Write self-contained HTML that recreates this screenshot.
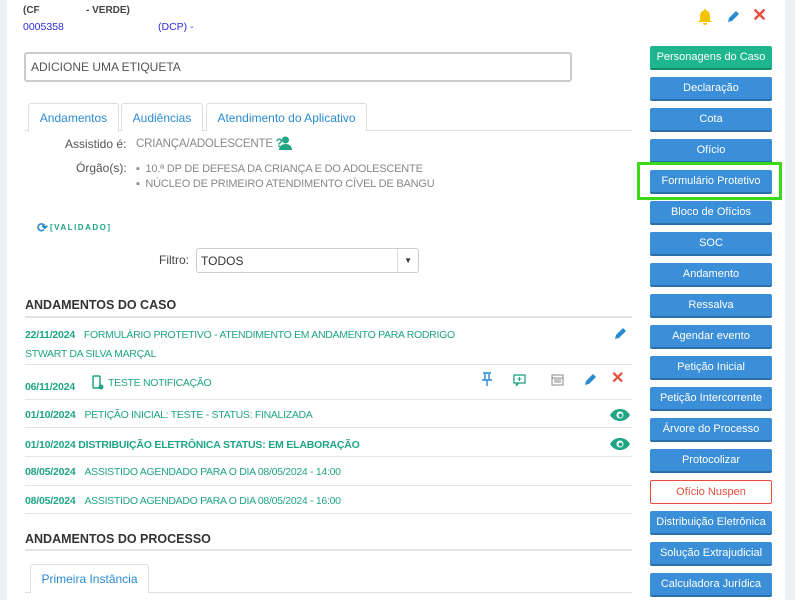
<!DOCTYPE html>
<html><head><meta charset="utf-8"><style>
*{box-sizing:border-box;margin:0;padding:0}
body{width:795px;height:600px;overflow:hidden;background:#fff;font-family:"Liberation Sans",sans-serif;position:relative;color:#555}
.a{position:absolute;white-space:nowrap}
.btn{position:absolute;left:650px;width:122px;height:24px;background:#3a8fd8;color:#fff;font-size:11px;text-align:center;line-height:23px;border-radius:2px;border-bottom:2px solid #2c6fa8}
.g{color:#1fa584;font-size:10.5px;letter-spacing:-0.3px}
.d{font-weight:bold;color:#1fa584;font-size:10.5px;letter-spacing:-0.2px}
.hr{position:absolute;left:25px;width:607px;height:1px;background:#e6e6e6}
.tab{position:absolute;top:103px;height:28px;border:1px solid #ddd;border-bottom:none;border-radius:3px 3px 0 0;color:#2a8ad0;font-size:12px;line-height:28px;text-align:center;background:#fff}
</style></head><body>
<div class="a" style="left:0;top:0;width:7px;height:600px;background:#eef0f2"></div>
<div class="a" style="left:785px;top:0;width:10px;height:600px;background:#eef0f2"></div>
<div class="a" style="left:23px;top:5px;font-size:10px;font-weight:bold;color:#444">(CF</div>
<div class="a" style="left:86px;top:5px;font-size:10px;font-weight:bold;color:#444">- VERDE)</div>
<div class="a" style="left:23px;top:21px;font-size:10.5px;color:#2b2bdd">0005358</div>
<div class="a" style="left:158px;top:21px;font-size:10.5px;color:#2b2bdd">(DCP) -</div>
<svg class="a" style="left:696px;top:8px" width="18" height="18" viewBox="0 0 18 18"><path d="M9 1c-1 0-1 1-1 1.5C5 3 4 6 4 8v4l-2 2h14l-2-2V8c0-2-1-5-4-5.5C10 2 10 1 9 1z M7 15a2 2 0 0 0 4 0z" fill="#f5c400"/></svg>
<svg class="a" style="left:726px;top:9px" width="15" height="15" viewBox="0 0 15 15"><path d="M2 13l1-4 7-7 3 3-7 7z" fill="#2a8ad0"/></svg>
<div class="a" style="left:752px;top:5px;font-size:18px;color:#e74c3c;font-weight:bold">✕</div>
<div class="a" style="left:24px;top:52px;width:548px;height:30px;border:2px solid #ccc;border-radius:3px;font-size:12px;line-height:26px;padding-left:5px;color:#555">ADICIONE UMA ETIQUETA</div>
<div class="a" style="left:25px;top:130px;width:607px;height:1px;background:#ddd"></div>
<div class="tab" style="left:28px;width:91px;height:29px">Andamentos</div>
<div class="tab" style="left:121px;width:82px">Audiências</div>
<div class="tab" style="left:206px;width:161px">Atendimento do Aplicativo</div>
<div class="a" style="left:65px;top:137px;font-size:12px;color:#555">Assistido é:</div>
<div class="a" style="left:136px;top:138px;font-size:11.5px;color:#888;letter-spacing:-0.2px">CRIANÇA/ADOLESCENTE <span style="color:#1fa584;font-weight:bold">?</span></div>
<svg class="a" style="left:279px;top:136px" width="13" height="14" viewBox="0 0 13 14"><circle cx="6.5" cy="4" r="3.5" fill="#1fa584"/><path d="M0 14c0-4 3-6 6.5-6S13 10 13 14z" fill="#1fa584"/></svg>
<div class="a" style="left:76px;top:161px;font-size:12px;color:#555">Órgão(s):</div>
<div class="a" style="left:136px;top:162px;font-size:11px;color:#888;line-height:15px;letter-spacing:-0.2px">▪ &nbsp;10.ª DP DE DEFESA DA CRIANÇA E DO ADOLESCENTE<br>▪ &nbsp;NÚCLEO DE PRIMEIRO ATENDIMENTO CÍVEL DE BANGU</div>
<div class="a" style="left:37px;top:220px;font-size:13px;color:#2a8ad0;font-weight:bold">⟳</div>
<div class="a" style="left:50px;top:223px;font-size:8px;color:#1fa584;letter-spacing:1.5px;font-weight:bold">[VALIDADO]</div>
<div class="a" style="left:159px;top:253px;font-size:12px;color:#444">Filtro:</div>
<div class="a" style="left:196px;top:248px;width:223px;height:25px;border:1px solid #ccc;border-radius:3px;font-size:12px;line-height:24px;padding-left:4px;color:#333">TODOS<span style="position:absolute;left:200px;top:0;width:1px;height:23px;background:#ddd"></span><span style="position:absolute;right:6px;top:0;font-size:8px">▼</span></div>
<div class="a" style="left:25px;top:298px;font-size:12.5px;font-weight:bold;color:#333">ANDAMENTOS DO CASO</div>
<div class="a" style="left:25px;top:316px;width:607px;height:2px;background:#e3e3e3"></div>
<div class="a" style="left:25px;top:325px;line-height:17px"><span class="d">22/11/2024</span> &nbsp;<span class="g">FORMULÁRIO PROTETIVO - ATENDIMENTO EM ANDAMENTO PARA RODRIGO</span><br><span class="g">STWART DA SILVA MARÇAL</span></div>
<svg class="a" style="left:613px;top:326px" width="15" height="15" viewBox="0 0 15 15"><path d="M2 13l1-4 7-7 3 3-7 7z" fill="#2a8ad0"/></svg>
<div class="hr" style="top:364px"></div>
<div class="a" style="left:25px;top:377px"><span class="d">06/11/2024</span></div>
<svg class="a" style="left:92px;top:375px" width="12" height="15" viewBox="0 0 12 15"><rect x="1" y="1" width="7" height="12" rx="1" fill="none" stroke="#1fa584" stroke-width="1.5"/><circle cx="9" cy="12" r="2.5" fill="#1fa584"/></svg>
<div class="a g" style="left:108px;top:377px">TESTE NOTIFICAÇÃO</div>
<svg class="a" style="left:481px;top:372px" width="12" height="15" viewBox="0 0 12 15"><path d="M2 1h8M4 1v7M8 1v7M1 8h10M6 8v6" stroke="#2a8ad0" stroke-width="1.4" fill="none"/></svg>
<svg class="a" style="left:513px;top:374px" width="13" height="13" viewBox="0 0 13 13"><rect x="1" y="1" width="11" height="8" fill="none" stroke="#1fa584" stroke-width="1.3"/><path d="M6.5 3v4M4.5 5h4M4 9l-1 3 3-3" stroke="#1fa584" fill="none"/></svg>
<svg class="a" style="left:551px;top:373px" width="13" height="13" viewBox="0 0 13 13"><rect x="1" y="2" width="11" height="10" fill="none" stroke="#888"/><path d="M1 5h11M3 7h7M3 9h7" stroke="#888"/></svg>
<svg class="a" style="left:583px;top:372px" width="15" height="15" viewBox="0 0 15 15"><path d="M2 13l1-4 7-7 3 3-7 7z" fill="#2a8ad0"/></svg>
<div class="a" style="left:611px;top:368px;font-size:16px;color:#e74c3c;font-weight:bold">✕</div>
<div class="hr" style="top:399px"></div>
<div class="a" style="left:25px;top:405px"><span class="d">01/10/2024</span> &nbsp;<span class="g">PETIÇÃO INICIAL: TESTE - STATUS: FINALIZADA</span></div>
<svg class="a" style="left:609px;top:408px" width="22" height="14" viewBox="0 0 22 14"><path d="M1 7C4 2 8 1 11 1s7 1 10 6c-3 5-7 6-10 6S4 12 1 7z" fill="#1fa584"/><circle cx="11" cy="7" r="3.5" fill="#fff"/><circle cx="11.5" cy="7.5" r="2" fill="#1fa584"/></svg>
<div class="hr" style="top:427px"></div>
<div class="a" style="left:25px;top:435px"><span class="d">01/10/2024 DISTRIBUIÇÃO ELETRÔNICA STATUS: EM ELABORAÇÃO</span></div>
<svg class="a" style="left:609px;top:437px" width="22" height="14" viewBox="0 0 22 14"><path d="M1 7C4 2 8 1 11 1s7 1 10 6c-3 5-7 6-10 6S4 12 1 7z" fill="#1fa584"/><circle cx="11" cy="7" r="3.5" fill="#fff"/><circle cx="11.5" cy="7.5" r="2" fill="#1fa584"/></svg>
<div class="hr" style="top:456px"></div>
<div class="a" style="left:25px;top:462px"><span class="d">08/05/2024</span> &nbsp;<span class="g">ASSISTIDO AGENDADO PARA O DIA 08/05/2024 - 14:00</span></div>
<div class="hr" style="top:485px"></div>
<div class="a" style="left:25px;top:491px"><span class="d">08/05/2024</span> &nbsp;<span class="g">ASSISTIDO AGENDADO PARA O DIA 08/05/2024 - 16:00</span></div>
<div class="hr" style="top:513px"></div>
<div class="a" style="left:25px;top:532px;font-size:12.5px;font-weight:bold;color:#333">ANDAMENTOS DO PROCESSO</div>
<div class="a" style="left:25px;top:549px;width:607px;height:2px;background:#e3e3e3"></div>
<div class="a" style="left:25px;top:592px;width:607px;height:1px;background:#ddd"></div>
<div class="tab" style="left:30px;top:564px;width:119px;height:29px">Primeira Instância</div>
<div class="btn" style="top:46px;background:#1fb58f;border-bottom-color:#168a6c">Personagens do Caso</div>
<div class="btn" style="top:77px">Declaração</div>
<div class="btn" style="top:108px">Cota</div>
<div class="btn" style="top:139px">Ofício</div>
<div class="a" style="left:637px;top:162px;width:145px;height:38px;border:3px solid #3ada1a"></div>
<div class="btn" style="top:170px">Formulário Protetivo</div>
<div class="btn" style="top:201px">Bloco de Ofícios</div>
<div class="btn" style="top:232px">SOC</div>
<div class="btn" style="top:263px">Andamento</div>
<div class="btn" style="top:294px">Ressalva</div>
<div class="btn" style="top:325px">Agendar evento</div>
<div class="btn" style="top:356px">Petição Inicial</div>
<div class="btn" style="top:387px">Petição Intercorrente</div>
<div class="btn" style="top:418px">Árvore do Processo</div>
<div class="btn" style="top:449px">Protocolizar</div>
<div class="btn" style="top:480px;background:#fff;color:#e74c3c;border:1px solid #e74c3c;line-height:22px">Ofício Nuspen</div>
<div class="btn" style="top:511px">Distribuição Eletrônica</div>
<div class="btn" style="top:542px">Solução Extrajudicial</div>
<div class="btn" style="top:573px">Calculadora Jurídica</div>
</body></html>
